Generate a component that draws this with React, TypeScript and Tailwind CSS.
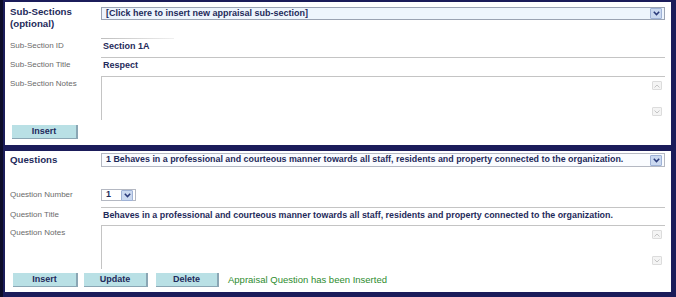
import React from "react";

const F = { fontFamily: '"Liberation Sans", Arial, sans-serif' };

function Chevron() {
  return (
    <svg width="7" height="5" viewBox="0 0 7 5">
      <path d="M0.8 0.8 L3.5 3.6 L6.2 0.8" fill="none" stroke="#2a3a7a" strokeWidth="1.5" />
    </svg>
  );
}

function ArrowBtn() {
  return (
    <div className="w-[12px] h-[11px] mr-[2px] flex items-center justify-center bg-[#cbd9f0] border border-[#9fb2d6] rounded-[1px]">
      <Chevron />
    </div>
  );
}

function Label({ children }: { children: React.ReactNode }) {
  return <div className="w-[91px] shrink-0 text-[8px] text-[#6a6a6a] leading-[10px]">{children}</div>;
}

function Btn({ children, w }: { children: React.ReactNode; w: string }) {
  return (
    <div
      className={`${w} h-[14px] flex items-center justify-center bg-[#b9e0e5] border-r-2 border-b border-[#8aa6b4] text-[9px] font-bold text-[#1e2a5c]`}
    >
      {children}
    </div>
  );
}

function Scroll() {
  return (
    <div className="w-[12px] h-full flex flex-col justify-between items-center py-[4px] mr-[2px]">
      <div className="w-[10px] h-[9px] border border-[#dcdcdc] bg-[#f4f4f4] flex items-center justify-center rounded-[1px]">
        <svg width="6" height="4" viewBox="0 0 6 4"><path d="M0.5 3.5 L3 1 L5.5 3.5" fill="none" stroke="#c4c4c4" strokeWidth="1" /></svg>
      </div>
      <div className="w-[10px] h-[9px] border border-[#dcdcdc] bg-[#f4f4f4] flex items-center justify-center rounded-[1px]">
        <svg width="6" height="4" viewBox="0 0 6 4"><path d="M0.5 0.5 L3 3 L5.5 0.5" fill="none" stroke="#c4c4c4" strokeWidth="1" /></svg>
      </div>
    </div>
  );
}

export default function App() {
  return (
    <div style={F} className="w-[676px] h-[297px] bg-[#1b1c5a] pl-[5px] pr-[5px] pt-[2px] pb-[5px] flex flex-col gap-[6px] border-l-[3px] border-[#0d0d2a] overflow-hidden">
      {/* Panel 1 */}
      <div className="h-[143px] bg-white pl-[5px] pr-[6px] pt-[3px] flex flex-col -ml-[3px]">
        <div className="flex items-start h-[25px]">
          <div className="w-[91px] shrink-0 text-[9.7px] font-bold text-[#1f2b5b] leading-[12px] pt-[1px]">
            Sub-Sections<br />(optional)
          </div>
          <div className="flex-1 mt-[2px] h-[13px] bg-[#eef5fd] border border-[#9aa3b3] flex items-center justify-between">
            <span className="pl-[4px] text-[9px] font-bold text-[#1f2b5b]">[Click here to insert new appraisal sub-section]</span>
            <ArrowBtn />
          </div>
        </div>
        <div className="flex items-start mt-[8px] h-[14px]">
          <div className="pt-[3px]"><Label>Sub-Section ID</Label></div>
          <div className="w-[73px] h-full border-t border-[#c8c8c8] pl-[2px] pt-[2px] text-[9px] font-bold text-[#1f2b5b] leading-[11px]" style={{ borderImage: "linear-gradient(to right,#bdbdbd,#f0f0f0) 1" }}>
            Section 1A
          </div>
        </div>
        <div className="flex items-start mt-[5px] h-[14px]">
          <div className="pt-[3px]"><Label>Sub-Section Title</Label></div>
          <div className="flex-1 h-full border-t border-[#c4c4c4] pl-[2px] pt-[2px] text-[9px] font-bold text-[#1f2b5b] leading-[11px]">
            Respect
          </div>
        </div>
        <div className="flex items-start mt-[5px] h-[44px]">
          <div className="pt-[3px]"><Label>Sub-Section Notes</Label></div>
          <div className="flex-1 h-full border-t border-l border-[#c4c4c4] flex justify-end">
            <Scroll />
          </div>
        </div>
        <div className="mt-[5px] pl-[2px]">
          <Btn w="w-[66px]">Insert</Btn>
        </div>
      </div>

      {/* Panel 2 */}
      <div className="h-[141px] bg-white pl-[5px] pr-[6px] pt-[2px] flex flex-col -ml-[3px]">
        <div className="flex items-center h-[14px]">
          <div className="w-[91px] shrink-0 text-[9.7px] font-bold text-[#1f2b5b] leading-[12px]">Questions</div>
          <div className="flex-1 h-[14px] bg-[#fafcff] border border-[#b4b8c2] flex items-center justify-between">
            <span className="pl-[4px] text-[8.9px] font-bold text-[#1f2b5b] whitespace-nowrap">
              1 Behaves in a professional and courteous manner towards all staff, residents and property connected to the organization.
            </span>
            <ArrowBtn />
          </div>
        </div>
        <div className="flex items-center mt-[22px] h-[12px]">
          <Label>Question Number</Label>
          <div className="w-[35px] h-[12px] border border-[#b4b8c2] flex items-center justify-between">
            <span className="pl-[4px] text-[9px] font-bold text-[#1f2b5b]">1</span>
            <ArrowBtn />
          </div>
        </div>
        <div className="flex items-start mt-[6px] h-[14px]">
          <div className="pt-[3px]"><Label>Question Title</Label></div>
          <div className="flex-1 h-full border-t border-[#c4c4c4] pl-[2px] pt-[2px] text-[8.9px] font-bold text-[#1f2b5b] leading-[11px] whitespace-nowrap">
            Behaves in a professional and courteous manner towards all staff, residents and property connected to the organization.
          </div>
        </div>
        <div className="flex items-start mt-[4px] h-[44px]">
          <div className="pt-[3px]"><Label>Question Notes</Label></div>
          <div className="flex-1 h-full border-t border-l border-[#c4c4c4] flex justify-end">
            <Scroll />
          </div>
        </div>
        <div className="mt-[4px] pl-[3px] flex items-center">
          <Btn w="w-[65px]">Insert</Btn>
          <div className="w-[6px]" />
          <Btn w="w-[64px]">Update</Btn>
          <div className="w-[8px]" />
          <Btn w="w-[63px]">Delete</Btn>
          <span className="ml-[9px] text-[9.5px] text-[#2e8b2e]">Appraisal Question has been Inserted</span>
        </div>
      </div>
    </div>
  );
}
